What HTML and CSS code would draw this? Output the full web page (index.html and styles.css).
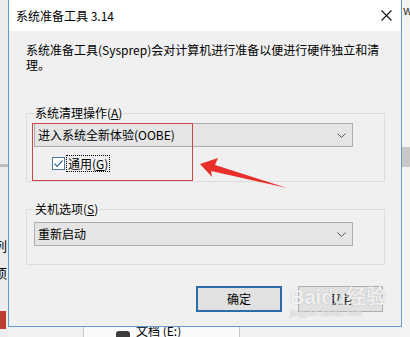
FILE: index.html
```html
<!DOCTYPE html>
<html lang="zh-CN">
<head>
    <meta charset="UTF-8">
    <title>系统准备工具 3.14</title>
    <link rel="stylesheet" href="styles.css">
</head>
<body>
    <div class="desk">
        <div class="sideLeft">
            <div class="sideLine"></div>
            <div class="sideText t1">列</div>
            <div class="sideText t2">项</div>
            <div class="sideRed"></div>
        </div>

        <div class="dialog">
            <div class="titleBar">
                <span class="titleText">系统准备工具 3.14</span>
                <svg class="closeX" width="11" height="11" viewBox="0 0 11 11">
                    <path d="M0.5 0.5 L10.5 10.5 M10.5 0.5 L0.5 10.5" stroke="#111" stroke-width="1.1" fill="none"/>
                </svg>
            </div>

            <div class="content">
                <p class="desc">系统准备工具(Sysprep)会对计算机进行准备以便进行硬件独立和清<br>理。</p>

                <fieldset class="group first">
                    <legend>系统清理操作(<u>A</u>)</legend>
                    <div class="combo">
                        <span>进入系统全新体验(OOBE)</span>
                        <svg class="chev" width="9" height="5" viewBox="0 0 9 5">
                            <path d="M0.5 0.5 L4.5 4.5 L8.5 0.5" stroke="#555" fill="none"/>
                        </svg>
                    </div>
                    <div class="checkRow">
                        <span class="checkBox">
                            <svg width="11" height="11" viewBox="0 0 11 11">
                                <path d="M1.5 5.5 L4.2 8.3 L9.5 2.5" stroke="#2f6fae" stroke-width="1.2" fill="none"/>
                            </svg>
                        </span>
                        <span class="checkLabel">通用(<u>G</u>)</span>
                    </div>
                </fieldset>

                <fieldset class="group second">
                    <legend>关机选项(<u>S</u>)</legend>
                    <div class="combo">
                        <span>重新启动</span>
                        <svg class="chev" width="9" height="5" viewBox="0 0 9 5">
                            <path d="M0.5 0.5 L4.5 4.5 L8.5 0.5" stroke="#555" fill="none"/>
                        </svg>
                    </div>
                </fieldset>

                <div class="buttons">
                    <button class="btn primary">确定</button>
                    <button class="btn">取消</button>
                </div>
            </div>
        </div>

        <div class="sideRight">
            <div class="rightW">w</div>
            <div class="rightBlock"></div>
        </div>

        <div class="under">
            <span class="driveIcon"></span>
            <span class="driveText">文档 (E:)</span>
        </div>

        <!-- 标注 -->
        <div class="redBox"></div>
        <svg class="arrow" width="410" height="337" viewBox="0 0 410 337">
            <polygon points="200,164 218,158 215,165 287,188 211,171 212,177" fill="#ea2f2a"/>
        </svg>

        <div class="mark">
            <div class="markBig">Bai<span class="paw">du</span>经验</div>
            <div class="markSmall">jingyan.baidu.com</div>
        </div>
    </div>
</body>
</html>
```

FILE: styles.css
```css
body {
    margin: 0;
    padding: 0;
    background-color: rgb(242, 242, 242);
    font-family: "Noto Sans CJK SC", "Noto Sans", sans-serif;
    font-size: 12px;
    color: #000;
}

.desk {
    position: relative;
    width: 410px;
    height: 337px;
    overflow: hidden;
    display: flex;
    align-items: flex-start;
}

.sideLeft {
    position: relative;
    width: 8px;
    height: 337px;
    background-color: rgb(236, 236, 236);
}

.sideLine {
    margin-top: 164px;
    height: 3px;
    background-color: rgb(190, 190, 190);
}

.sideText {
    position: absolute;
    left: -6px;
    font-size: 13px;
    line-height: 15px;
}

.t1 {
    top: 238px;
}

.t2 {
    top: 265px;
}

.sideRed {
    position: absolute;
    left: 0;
    top: 311px;
    width: 6px;
    height: 18px;
    background-color: rgb(190, 60, 50);
}

.dialog {
    width: 394px;
    height: 327px;
    box-sizing: border-box;
    border: 1px solid rgb(96, 156, 210);
    border-top: none;
    background-color: rgb(240, 240, 240);
    position: relative;
    z-index: 1;
}

.titleBar {
    height: 31px;
    background-color: white;
    display: flex;
    align-items: center;
    justify-content: space-between;
    padding-left: 7px;
    padding-right: 9px;
}

.titleText {
    font-size: 12px;
    line-height: 14px;
}

.content {
    padding: 11px 16px 0 17px;
}

.desc {
    margin: 0;
    line-height: 15px;
}

.group {
    margin: 34px 0 0 0;
    padding: 0 7px 9px 7px;
    border: 1px solid rgb(220, 220, 220);
}

.group legend {
    padding: 0 1px;
    line-height: 14px;
    font-size: 12px;
}

.combo {
    margin-top: 3px;
    width: 319px;
    height: 24px;
    box-sizing: border-box;
    border: 1px solid rgb(173, 173, 173);
    background-color: rgb(229, 229, 229);
    display: flex;
    align-items: center;
    justify-content: space-between;
    padding: 0 5px 0 3px;
    line-height: 16px;
}

.chev {
    margin-right: 1px;
}

.checkRow {
    margin-top: 7px;
    height: 18px;
    display: flex;
    align-items: center;
    padding-left: 18px;
}

.checkBox {
    width: 13px;
    height: 13px;
    box-sizing: border-box;
    border: 1px solid rgb(80, 120, 160);
    background-color: white;
    display: flex;
    align-items: center;
    justify-content: center;
}

.checkLabel {
    margin-left: 2px;
    padding: 0 1px;
    line-height: 15px;
    outline: 1px dotted #000;
}

.group.second {
    margin-top: 20px;
    padding-bottom: 18px;
}

.group.second .combo {
    margin-top: 6px;
}

.buttons {
    margin-top: 21px;
    display: flex;
    justify-content: flex-end;
    gap: 16px;
    padding-right: 2px;
}

.btn {
    width: 85px;
    height: 26px;
    box-sizing: border-box;
    border: 1px solid rgb(173, 173, 173);
    background-color: rgb(225, 225, 225);
    font-family: "Noto Sans CJK SC", "Noto Sans", sans-serif;
    font-size: 12px;
    line-height: 14px;
    padding: 0;
    color: #000;
}

.btn.primary {
    width: 86px;
    border: 2px solid rgb(42, 110, 165);
}

.sideRight {
    position: relative;
    width: 8px;
    height: 337px;
    background-color: rgb(244, 244, 244);
}

.rightW {
    margin-left: 1px;
    font-size: 12px;
    line-height: 14px;
    margin-top: 3px;
    color: #333;
}

.rightBlock {
    margin-top: 130px;
    height: 20px;
    background-color: rgb(200, 200, 200);
}

.under {
    position: absolute;
    left: 83px;
    top: 327px;
    width: 155px;
    height: 10px;
    background-color: rgb(250, 250, 250);
    border-left: 1px solid rgb(200, 200, 200);
    border-right: 1px solid rgb(200, 200, 200);
    display: flex;
    align-items: flex-start;
    overflow: hidden;
}

.driveIcon {
    margin: 4px 0 0 32px;
    width: 14px;
    height: 10px;
    background-color: rgb(60, 60, 60);
    border-radius: 3px;
}

.driveText {
    margin-left: 6px;
    margin-top: -3px;
    font-size: 12px;
    line-height: 14px;
}

.redBox {
    position: absolute;
    left: 32px;
    top: 123px;
    width: 159px;
    height: 56px;
    border: 1px solid rgb(205, 70, 65);
    z-index: 2;
}

.arrow {
    position: absolute;
    left: 0;
    top: 0;
    z-index: 3;
    pointer-events: none;
}

.mark {
    position: absolute;
    left: 290px;
    top: 286px;
    z-index: 4;
    color: rgba(255, 255, 255, 0.85);
    text-shadow: 0 0 1px rgba(120, 120, 120, 0.6);
}

.markBig {
    font-family: "Liberation Sans", sans-serif;
    font-weight: bold;
    font-size: 20px;
    line-height: 22px;
}

.markSmall {
    font-family: "Liberation Sans", sans-serif;
    font-size: 9px;
    line-height: 10px;
    color: rgba(255, 255, 255, 0.7);
}
```
